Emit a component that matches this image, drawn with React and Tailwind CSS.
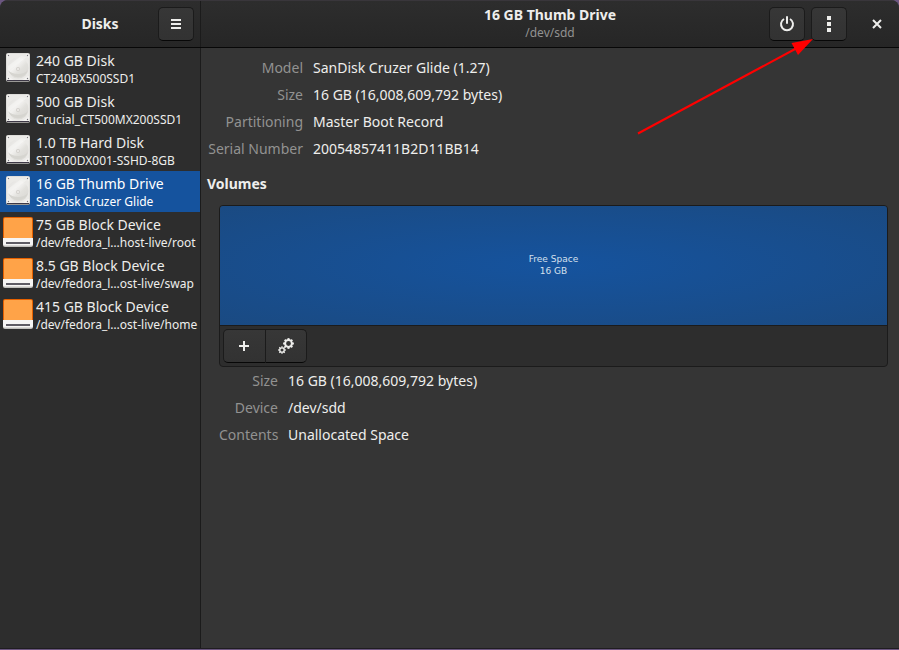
import React from "react";

const devices = [
  { name: "240 GB Disk", detail: "CT240BX500SSD1", kind: "disk" },
  { name: "500 GB Disk", detail: "Crucial_CT500MX200SSD1", kind: "disk" },
  { name: "1.0 TB Hard Disk", detail: "ST1000DX001-SSHD-8GB", kind: "disk" },
  { name: "16 GB Thumb Drive", detail: "SanDisk Cruzer Glide", kind: "disk", selected: true },
  { name: "75 GB Block Device", detail: "/dev/fedora_l…host-live/root", kind: "block" },
  { name: "8.5 GB Block Device", detail: "/dev/fedora_l…ost-live/swap", kind: "block" },
  { name: "415 GB Block Device", detail: "/dev/fedora_l…ost-live/home", kind: "block" },
];

const driveInfo = [
  ["Model", "SanDisk Cruzer Glide (1.27)"],
  ["Size", "16 GB (16,008,609,792 bytes)"],
  ["Partitioning", "Master Boot Record"],
  ["Serial Number", "20054857411B2D11BB14"],
];

const volumeInfo = [
  ["Size", "16 GB (16,008,609,792 bytes)"],
  ["Device", "/dev/sdd"],
  ["Contents", "Unallocated Space"],
];

const buttonLook =
  "flex items-center justify-center border border-[#1b1b1b] border-b-[#070707] bg-linear-to-t from-[#323232] to-[#373737] text-[#eeeeec]";

function DiskIcon() {
  return (
    <svg width="32" height="32" viewBox="0 0 32 32" className="shrink-0" aria-hidden="true">
      <defs>
        <linearGradient id="platter" x1="0" y1="0" x2="1" y2="1">
          <stop offset="0" stopColor="#deddda" />
          <stop offset="0.4" stopColor="#f3f2f0" />
          <stop offset="0.6" stopColor="#e2e1dd" />
          <stop offset="1" stopColor="#d8d6d2" />
        </linearGradient>
      </defs>
      <rect x="4" y="2" width="24" height="28" rx="2" fill="#9a9996" />
      <rect x="4" y="1" width="24" height="28" rx="2" fill="#deddda" />
      <rect x="5" y="2" width="22" height="26" rx="1" fill="#f4f3f1" />
      <path d="M8 2h16c0 3 3 3 3 5v17c-3 0-4 3-7 4h-8c-3-1-4-4-7-4V7c0-2 3-2 3-5Z" fill="#ebeae7" />
      <circle cx="16" cy="16" r="10.500" fill="url(#platter)" />
      <path d="M6 18a10.500 10.500 0 0 0 20 0 12 9 0 0 1-20 0Z" fill="#d6d5d0" />
      <path d="M6 14 19 4l6 1L6 19Z" fill="#f8f7f6" opacity=".5" />
      <circle cx="16" cy="17" r="2" fill="#d2d0cc" />
      <circle cx="16" cy="17" r="1" fill="#f0efed" />
      <g fill="#77767b">
        <circle cx="6.500" cy="3.500" r=".7" />
        <circle cx="25.500" cy="3.500" r=".7" />
        <circle cx="6.500" cy="26.500" r=".7" />
        <circle cx="25.500" cy="26.500" r=".7" />
      </g>
      <path d="M5 28.500h22" stroke="#3d3846" />
    </svg>
  );
}

function BlockIcon() {
  return (
    <svg width="32" height="32" viewBox="0 0 32 32" className="shrink-0" aria-hidden="true">
      <rect x="1" y="1" width="30" height="29" rx="2" fill="#e66100" />
      <rect x="2" y="2" width="28" height="24" rx="1" fill="#ffa348" />
      <path d="M1 22h30v7a2 2 0 0 1-2 2H3a2 2 0 0 1-2-2Z" fill="#c0bfbc" />
      <path d="M1 22h30v6a1.500 1.500 0 0 1-1.500 1.500h-27A1.500 1.500 0 0 1 1 28Z" fill="#f6f5f4" />
      <path d="M4 27h24" stroke="#5e5c64" strokeWidth="2" />
    </svg>
  );
}

function Gear({ cx, cy, r, teeth, tooth, stroke }) {
  return (
    <g fill="none" stroke="currentColor" transform={`translate(${cx} ${cy})`}>
      <circle r={r} strokeWidth={stroke} />
      {Array.from({ length: teeth }, (_, i) => (
        <path key={i} d={`M0 ${-r}V${-r - tooth}`} strokeWidth={stroke} transform={`rotate(${(360 / teeth) * i})`} />
      ))}
    </g>
  );
}

function InfoList({ rows, columns }) {
  return (
    <dl className={`grid ${columns} gap-x-[10px] text-[14px] leading-[27px]`}>
      {rows.map(([label, value]) => (
        <React.Fragment key={label}>
          <dt className="text-right whitespace-nowrap text-[#929291]">{label}</dt>
          <dd className="text-[#eeeeec]">{value}</dd>
        </React.Fragment>
      ))}
    </dl>
  );
}

export default function App() {
  return (
    <div className="flex min-h-screen flex-col bg-[#6b5680] pb-px font-['Noto_Sans',sans-serif] text-[#eeeeec]">
      <div className="flex flex-1 flex-col overflow-hidden rounded-t-lg border-b border-[#1f1d20] bg-[#353535]">
        <header className="flex h-12 border-t border-b border-t-[#39363b] border-b-[#070707] bg-linear-to-t from-[#262626] to-[#2d2d2d]">
          <div className="flex w-[201px] shrink-0 items-center border-r border-[#1b1b1b] pr-[6px]">
            <h1 className="ml-[42px] flex-1 pb-[2px] text-center text-[14px] font-bold">Disks</h1>
            <button aria-label="Main menu" className={`${buttonLook} h-[34px] w-9 rounded-[5px]`}>
              <svg width="16" height="16" viewBox="0 0 16 16" aria-hidden="true">
                <path d="M3 3h10v2H3zM3 7h10v2H3zM3 11h10v2H3z" fill="currentColor" />
              </svg>
            </button>
          </div>
          <div className="grid flex-1 grid-cols-[1fr_auto_1fr] items-center">
            <div className="col-start-2 text-center">
              <h2 className="text-[14px] leading-[18px] font-bold">16 GB Thumb Drive</h2>
              <p className="text-[12px] leading-[18px] text-[#929291]">/dev/sdd</p>
            </div>
            <div className="flex items-center justify-end gap-[6px] pr-1">
              <button aria-label="Power off" className={`${buttonLook} h-[34px] w-9 rounded-[5px]`}>
                <svg width="16" height="16" viewBox="0 0 16 16" fill="none" stroke="currentColor" strokeWidth="2" aria-hidden="true">
                  <path d="M5 3A6 6 0 1 0 11 3" />
                  <path d="M8 1v6" strokeLinecap="round" />
                </svg>
              </button>
              <div className="relative">
                <button aria-label="Drive options" className={`${buttonLook} h-[34px] w-9 rounded-[5px]`}>
                  <svg width="16" height="18" viewBox="0 0 16 18" aria-hidden="true">
                    <path d="M6 1h4v4H6zM6 7h4v4H6zM6 13h4v4H6z" fill="currentColor" />
                  </svg>
                </button>
                <svg
                  className="pointer-events-none absolute top-[30px] right-[34px]"
                  width="180"
                  height="100"
                  viewBox="0 0 180 100"
                  aria-hidden="true"
                >
                  <path d="M5 96.500 164 11" stroke="#f00" strokeWidth="2" />
                  <path d="M180 2 158.500 6l6.500 12Z" fill="#f00" />
                </svg>
              </div>
              <button aria-label="Close" className="ml-[6px] flex h-[34px] w-9 items-center justify-center">
                <svg width="16" height="16" viewBox="0 0 16 16" stroke="currentColor" strokeWidth="2" aria-hidden="true">
                  <path d="m4 4 8 8M12 4l-8 8" />
                </svg>
              </button>
            </div>
          </div>
        </header>

        <div className="flex flex-1">
          <nav aria-label="Devices" className="w-[201px] shrink-0 border-r border-[#1b1b1b] bg-[#2d2d2d]">
            <ul>
              {devices.map((device) => (
                <li key={device.name}>
                  <button
                    aria-current={device.selected ? "true" : undefined}
                    className={`flex h-[41px] w-full items-start gap-[2px] pt-1 pl-[2px] text-left whitespace-nowrap ${
                      device.selected ? "bg-[#15539e] text-white" : ""
                    }`}
                  >
                    {device.kind === "disk" ? <DiskIcon /> : <BlockIcon />}
                    <span className="flex flex-col">
                      <span className="text-[14px] leading-[18px]">{device.name}</span>
                      <span className="text-[12px] leading-[18px]">{device.detail}</span>
                    </span>
                  </button>
                </li>
              ))}
            </ul>
          </nav>

          <main className="flex-1 px-[6px] pt-[6px]">
            <InfoList rows={driveInfo} columns="grid-cols-[96px_1fr]" />
            <h3 className="mt-[10px] text-[14px] leading-6 font-bold">Volumes</h3>
            <section className="mt-[9px] mr-[5px] ml-3">
              <div className="overflow-hidden rounded-[4px] border border-[#1b1b1b] bg-[#2d2d2d]">
                <div className="flex h-[119px] flex-col items-center justify-center bg-radial from-[#15539e] to-[#1a4a82] pb-[2px] text-center font-['DejaVu_Sans',sans-serif] text-[9px] leading-3 text-[#d5e0ee]">
                  <p>Free Space</p>
                  <p>16 GB</p>
                </div>
                <div className="flex border-t border-[#1b1b1b] p-[3px]">
                  <button aria-label="Create partition" className={`${buttonLook} h-[34px] w-[43px] rounded-l-[5px] pr-px`}>
                    <svg width="16" height="16" viewBox="0 0 16 16" aria-hidden="true">
                      <path d="M7 3h2v4h4v2H9v4H7V9H3V7h4z" fill="currentColor" />
                    </svg>
                  </button>
                  <button aria-label="Partition options" className={`${buttonLook} h-[34px] w-[41px] rounded-r-[5px] border-l-0`}>
                    <svg width="16" height="16" viewBox="0 0 16 16" aria-hidden="true">
                      <Gear cx={10.5} cy={5.5} r={3.4} teeth={8} tooth={2} stroke={2} />
                      <Gear cx={4} cy={12} r={2.2} teeth={8} tooth={1.6} stroke={1.3} />
                    </svg>
                  </button>
                </div>
              </div>
              <InfoList rows={volumeInfo} columns="grid-cols-[59px_1fr]" />
            </section>
          </main>
        </div>
      </div>
    </div>
  );
}
